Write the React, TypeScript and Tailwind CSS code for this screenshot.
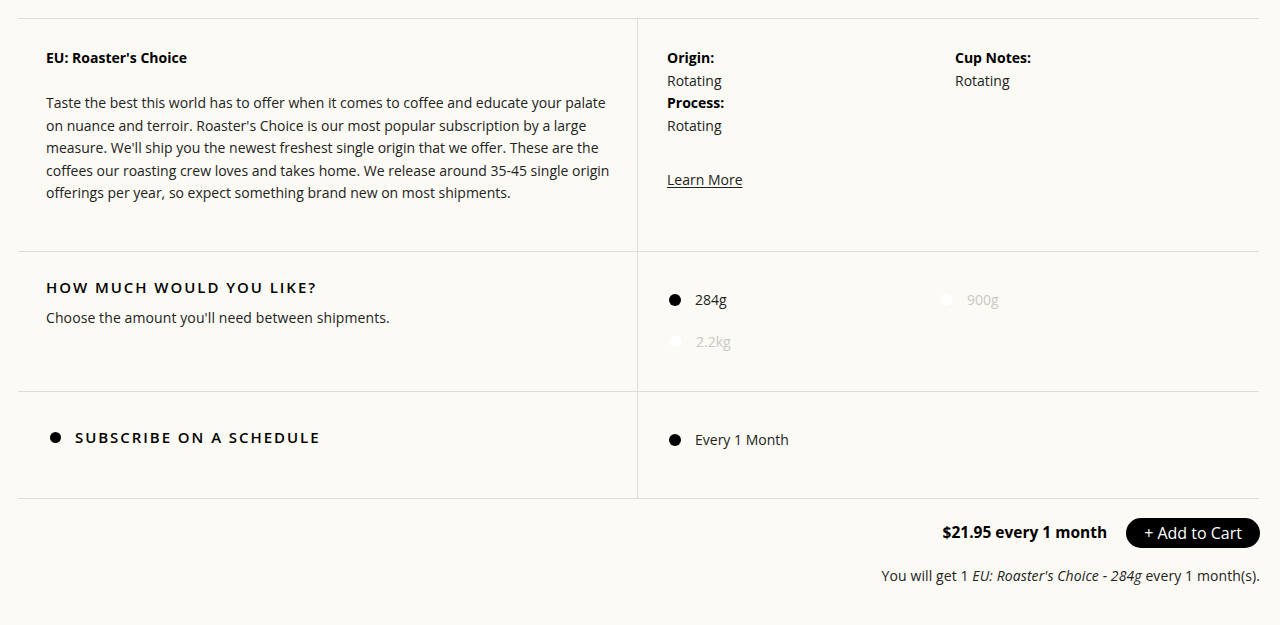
import React from "react";

const font = { fontFamily: '"Open Sans", "Noto Sans", sans-serif' };

function Radio({ checked, label }: { checked?: boolean; label: string }) {
  return (
    <div className="flex items-center h-[22px]">
      <span
        className={
          checked
            ? "w-[12px] h-[12px] rounded-full bg-black ml-[2px]"
            : "w-[13px] h-[13px] rounded-full bg-white ml-[2px] shadow-[0_0_1px_rgba(0,0,0,0.05)]"
        }
      />
      <span className={"ml-[14px] text-[14px] " + (checked ? "text-[#222]" : "text-[#c9c9c6]")}>{label}</span>
    </div>
  );
}

export default function App() {
  return (
    <div className="min-h-screen bg-[#fbfaf4] text-[#222]" style={font}>
      <div className="pl-[18px] pr-[21px] pt-[18px]">
        {/* Row 1 */}
        <div className="grid grid-cols-[620px_1fr] border-t border-[#dedddb]">
          <div className="border-r border-[#dedddb] pl-[28px] pr-[4px] pt-[29px] pb-[46px]">
            <h2 className="text-[14px] font-bold text-black leading-[20px]">EU: Roaster's Choice</h2>
            <p className="mt-[24px] text-[14px] leading-[22.5px] text-[#222] whitespace-nowrap">
              Taste the best this world has to offer when it comes to coffee and educate your palate
              <br />
              on nuance and terroir. Roaster's Choice is our most popular subscription by a large
              <br />
              measure. We'll ship you the newest freshest single origin that we offer. These are the
              <br />
              coffees our roasting crew loves and takes home. We release around 35-45 single origin
              <br />
              offerings per year, so expect something brand new on most shipments.
            </p>
          </div>
          <div className="pl-[29px] pt-[28px]">
            <div className="grid grid-cols-[288px_288px] text-[14px] leading-[22.5px]">
              <div>
                <div className="font-bold text-black">Origin:</div>
                <div>Rotating</div>
                <div className="font-bold text-black">Process:</div>
                <div>Rotating</div>
              </div>
              <div>
                <div className="font-bold text-black">Cup Notes:</div>
                <div>Rotating</div>
              </div>
            </div>
            <a className="inline-block mt-[32px] text-[14px] leading-[22.5px] underline underline-offset-2 text-[#222]" href="#">
              Learn More
            </a>
          </div>
        </div>

        {/* Row 2 */}
        <div className="grid grid-cols-[620px_1fr] border-t border-[#dedddb] h-[140px]">
          <div className="border-r border-[#dedddb] pl-[28px] pt-[24px]">
            <h3 className="text-[15px] font-semibold uppercase tracking-[0.13em] text-black leading-[22px]">How much would you like?</h3>
            <p className="mt-[10px] text-[14px] leading-[20px] tracking-[0.1px]">Choose the amount you'll need between shipments.</p>
          </div>
          <div className="pl-[29px] pt-[37px]">
            <div className="grid grid-cols-[271px_271px] gap-y-[20px]">
              <Radio checked label="284g" />
              <Radio label="900g" />
              <Radio label="2.2kg" />
            </div>
          </div>
        </div>

        {/* Row 3 */}
        <div className="grid grid-cols-[620px_1fr] border-t border-b border-[#dedddb] h-[108px]">
          <div className="border-r border-[#dedddb] pl-[32px] pt-[35px] flex items-start">
            <div className="flex items-center h-[22px]">
              <span className="w-[11px] h-[11px] rounded-full bg-black" />
              <span className="ml-[14px] text-[15px] font-semibold uppercase tracking-[0.13em] text-black">Subscribe on a schedule</span>
            </div>
          </div>
          <div className="pl-[29px] pt-[37px]">
            <Radio checked label="Every 1 Month" />
          </div>
        </div>

        {/* Footer */}
        <div className="flex flex-col items-end pt-[19px]">
          <div className="flex items-center gap-[19px] mr-[-1px]">
            <span className="text-[15.5px] font-bold text-black">$21.95 every 1 month</span>
            <button className="h-[30px] px-[18px] rounded-full bg-black text-white text-[16px] leading-none">+ Add to Cart</button>
          </div>
          <p className="mt-[18px] text-[14px] leading-[20px] tracking-[0.1px] mr-[-1px]">
            You will get 1 <em>EU: Roaster's Choice - 284g</em> every 1 month(s).
          </p>
        </div>
      </div>
    </div>
  );
}
